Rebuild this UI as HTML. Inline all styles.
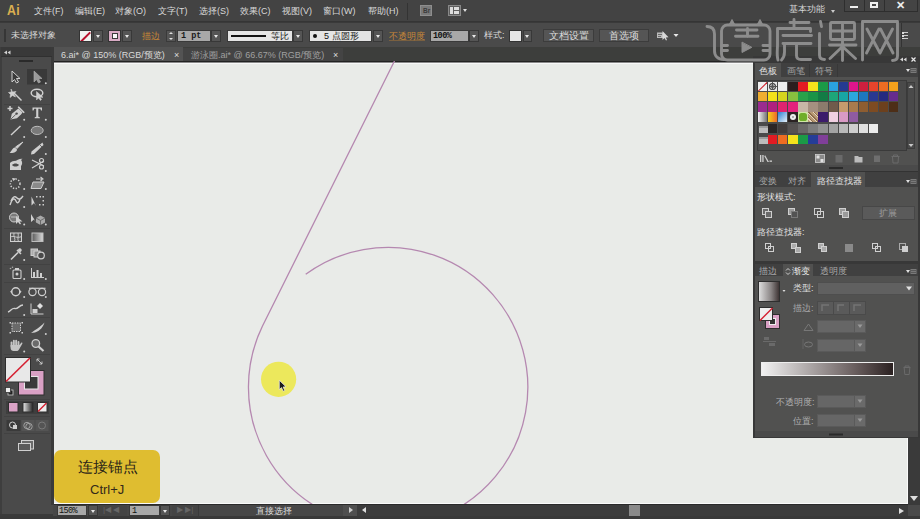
<!DOCTYPE html>
<html><head><meta charset="utf-8">
<style>
*{margin:0;padding:0;box-sizing:border-box}
html,body{width:920px;height:519px;overflow:hidden;background:#3a3a3a}
body{position:relative;font-family:"Liberation Sans",sans-serif;font-size:9px;color:#d8d8d8}
.a{position:absolute}
.t{position:absolute;white-space:nowrap;line-height:1}
#menu{left:0;top:0;width:920px;height:22px;background:#434343;border-bottom:1px solid #353535}
#ctrl{left:0;top:23px;width:920px;height:24px;background:#4a4a4a}
#tabs{left:0;top:47px;width:920px;height:14px;background:#3d3e3c}
#tool{left:0;top:47px;width:53px;height:467px;background:#4a4a4a}
#canvas{left:54px;top:61px;width:854px;height:443px;border-top:1px solid #222;background:linear-gradient(#8a8a8a 0 1px,#f8f8f8 1px 2.5px,#e9ebe8 2.5px);border-right:1px solid #fafafa;border-bottom:1px solid #fafafa}
#status{left:53px;top:504px;width:867px;height:12px;background:#3c3c3c;border-top:1px solid #2a2a2a}
#bot{left:0;top:516px;width:920px;height:3px;background:#393939}
.dd{position:absolute;background:#555;border:1px solid #383838}
.dd:after{content:"";position:absolute;left:50%;top:50%;margin-left:-2.5px;margin-top:-1px;border-left:2.5px solid transparent;border-right:2.5px solid transparent;border-top:3px solid #e8e8e8}
.fld{position:absolute;background:#a8a8a8;border:1px solid #3a3a3a;color:#222;font-size:9px}
.btn{position:absolute;background:#555;border:1px solid #3c3c3c;color:#ddd;font-size:10px;text-align:center;line-height:11px}
.or{color:#d98a2a}
</style></head><body>
<div id="menu" class="a"></div>
<div id="ctrl" class="a"></div>
<div id="tabs" class="a"></div>
<div id="tool" class="a"></div>
<div id="canvas" class="a"></div>
<div id="status" class="a"></div>
<div id="bot" class="a"></div>
<!-- MENU -->
<div class="t" style="left:6.8px;top:2.3px;font-size:15px;font-weight:bold;color:#dbb050;letter-spacing:0.3px;transform:scaleX(0.82);transform-origin:0 0">Ai</div>
<div class="t" style="left:34px;top:7px">文件(F)</div>
<div class="t" style="left:75px;top:7px">编辑(E)</div>
<div class="t" style="left:115px;top:7px">对象(O)</div>
<div class="t" style="left:158px;top:7px">文字(T)</div>
<div class="t" style="left:199px;top:7px">选择(S)</div>
<div class="t" style="left:240px;top:7px">效果(C)</div>
<div class="t" style="left:282px;top:7px">视图(V)</div>
<div class="t" style="left:323px;top:7px">窗口(W)</div>
<div class="t" style="left:368px;top:7px">帮助(H)</div>
<div class="a" style="left:407px;top:3px;width:1px;height:17px;background:#333"></div>
<div class="a" style="left:420px;top:5px;width:12px;height:11px;background:#7a7a7a;border:1px solid #8e8e8e"></div>
<div class="t" style="left:423px;top:7.5px;font-size:6.5px;font-weight:bold;color:#3a3a3a">Br</div>
<div class="a" style="left:448px;top:5px;width:13px;height:11px;background:#5e5e5e;border:1px solid #888"></div>
<div class="a" style="left:450px;top:7px;width:3px;height:7px;background:#ddd"></div>
<div class="a" style="left:454px;top:7px;width:5px;height:3px;background:#ddd"></div>
<div class="a" style="left:454px;top:11px;width:5px;height:3px;background:#ddd"></div>
<div class="a" style="left:463px;top:9px;border-left:2.5px solid transparent;border-right:2.5px solid transparent;border-top:3px solid #ddd"></div>
<div class="t" style="left:789px;top:5px;font-size:9px">基本功能</div>
<div class="a" style="left:831px;top:10px;border-left:2px solid transparent;border-right:2px solid transparent;border-top:3px solid #ccc"></div>
<div class="a" style="left:844px;top:0;width:74px;height:12px;background:#444;border:1px solid #2e2e2e;border-top:none"></div>
<div class="a" style="left:864px;top:0;width:1px;height:11px;background:#2e2e2e"></div>
<div class="a" style="left:884px;top:0;width:1px;height:11px;background:#2e2e2e"></div>
<div class="a" style="left:850px;top:6px;width:8px;height:2px;background:#eee"></div>
<div class="a" style="left:870px;top:2px;width:8px;height:6px;border:2px solid #eee"></div>
<div class="t" style="left:896px;top:0px;font-size:11px;color:#eee;font-weight:bold">✕</div>
<!-- CONTROL -->
<div class="a" style="left:4px;top:29px;width:2px;height:13px;background:#363636"></div>
<div class="t" style="left:11px;top:31px">未选择对象</div>
<div class="a" style="left:79px;top:30px;width:13px;height:12px;background:#f0f2f0;border:1px solid #333;overflow:hidden"><div class="a" style="left:-1px;top:4.6px;width:13px;height:1.6px;background:#b8102c;transform:rotate(-45deg)"></div></div>
<div class="dd" style="left:93px;top:30px;width:10px;height:12px"></div>
<div class="a" style="left:108px;top:30px;width:13px;height:12px;background:#d8abc4;border:1px solid #333"><div class="a" style="left:2.5px;top:2px;width:6px;height:6px;background:#f8f8f8;border:1.3px solid #3a3a3a"></div></div>
<div class="dd" style="left:122px;top:30px;width:10px;height:12px"></div>
<div class="t or" style="left:142px;top:31.5px;color:#c88838">描边</div>
<div class="a" style="left:166px;top:30px;width:10px;height:12px;background:#555;border:1px solid #3a3a3a"></div>
<div class="a" style="left:169px;top:32px;border-left:2px solid transparent;border-right:2px solid transparent;border-bottom:2px solid #ddd"></div>
<div class="a" style="left:169px;top:38px;border-left:2px solid transparent;border-right:2px solid transparent;border-top:2px solid #ddd"></div>
<div class="fld" style="left:177px;top:30px;width:34px;height:12px;padding-left:3px;line-height:10px;font-family:'Liberation Mono',monospace;font-size:8.5px;font-weight:bold;color:#1a1a1a">1 pt</div>
<div class="dd" style="left:211px;top:30px;width:10px;height:12px"></div>
<div class="a" style="left:227px;top:30px;width:66px;height:12px;background:#e4e4e4;border:1px solid #3a3a3a"></div>
<div class="a" style="left:231px;top:35px;width:35px;height:2px;background:#111"></div>
<div class="t" style="left:271px;top:32px;color:#111">等比</div>
<div class="dd" style="left:293px;top:30px;width:10px;height:12px"></div>
<div class="a" style="left:309px;top:30px;width:63px;height:12px;background:#e4e4e4;border:1px solid #3a3a3a"></div>
<div class="a" style="left:313px;top:34px;width:4px;height:4px;border-radius:50%;background:#111"></div>
<div class="t" style="left:324px;top:32px;color:#111">5 点圆形</div>
<div class="dd" style="left:373px;top:30px;width:10px;height:12px"></div>
<div class="t or" style="left:389px;top:31.5px;text-decoration:underline;text-decoration-color:#7a6040;color:#c88838">不透明度</div>
<div class="fld" style="left:430px;top:30px;width:39px;height:12px;padding-left:2px;line-height:10px;font-family:'Liberation Mono',monospace;font-size:8.5px;font-weight:bold;color:#111;letter-spacing:-0.5px">100%</div>
<div class="dd" style="left:469px;top:30px;width:10px;height:12px"></div>
<div class="t" style="left:484px;top:31px">样式:</div>
<div class="a" style="left:509px;top:30px;width:13px;height:12px;background:#e6e6e6;border:1px solid #333"></div>
<div class="dd" style="left:523px;top:30px;width:9px;height:12px"></div>
<div class="btn" style="left:543px;top:29px;width:51px;height:13px">文档设置</div>
<div class="btn" style="left:599px;top:29px;width:50px;height:13px">首选项</div>
<svg class="a" style="left:650px;top:26px" width="35" height="20" viewBox="650 26 35 20"><rect x="657" y="32.5" width="6.5" height="5.5" fill="#bbb"/><path d="M658 34.5 H662 M658 36.5 H661" stroke="#555" stroke-width="0.8"/><path d="M662.5 31 L662.5 40 L664.5 38 L666 40.5 L667 40 L665.8 37.5 L668.5 37.3Z" fill="#d8d8d8"/><path d="M673.5 34 L678.5 34 L676 37Z" fill="#e8e8e8"/></svg>
<div class="a" style="left:901px;top:23px;width:1px;height:24px;background:#333"></div>
<div class="a" style="left:902px;top:32px;width:1.5px;height:1.5px;background:#ddd"></div><div class="a" style="left:904px;top:32px;width:4px;height:1px;background:#ccc"></div>
<div class="a" style="left:902px;top:35px;width:1.5px;height:1.5px;background:#ddd"></div><div class="a" style="left:904px;top:35px;width:4px;height:1px;background:#ccc"></div>
<div class="a" style="left:902px;top:37.5px;width:1.5px;height:1.5px;background:#ddd"></div><div class="a" style="left:904px;top:37.5px;width:4px;height:1px;background:#ccc"></div>
<!-- TABS -->
<div class="a" style="left:54px;top:47px;width:129px;height:14px;background:#535353"></div>
<div class="t" style="left:61px;top:51px;color:#dadada">6.ai* @ 150% (RGB/预览)</div>
<div class="t" style="left:174px;top:51px;color:#ddd;font-size:9px">×</div>
<div class="a" style="left:183px;top:48px;width:160px;height:13px;background:#444"></div>
<div class="t" style="left:191px;top:51px;color:#a0a0a0">游泳圈.ai* @ 66.67% (RGB/预览)</div>
<div class="t" style="left:333px;top:51px;color:#ddd;font-size:9px">×</div>

<!-- TOOLBAR -->
<div class="a" style="left:0;top:47px;width:2px;height:467px;background:#3e3e3e"></div>
<div class="a" style="left:1px;top:47px;width:51px;height:9px;background:#393939"></div>
<div class="a" style="left:51px;top:47px;width:3px;height:458px;background:#3a3a3a"></div>
<div class="a" style="left:1px;top:56px;width:51px;height:1px;background:#303030"></div>
<svg class="a" style="left:0;top:0" width="54" height="505" viewBox="0 0 54 505">
<g fill="#d0d0d0"><path d="M4 52.5 L7 50.5 L7 54.5Z M7.5 52.5 L10.5 50.5 L10.5 54.5Z"/></g>
<rect x="19" y="60" width="14" height="2" fill="#2a2a2a"/>
<g stroke="#424242" stroke-width="1">
<line x1="4" y1="104.5" x2="50" y2="104.5"/>
<line x1="4" y1="228.5" x2="50" y2="228.5"/><line x1="4" y1="264.5" x2="50" y2="264.5"/>
<line x1="4" y1="282.5" x2="50" y2="282.5"/><line x1="4" y1="317.5" x2="50" y2="317.5"/>
<line x1="4" y1="354.5" x2="50" y2="354.5"/><line x1="4" y1="399.5" x2="50" y2="399.5"/>
<line x1="4" y1="416.5" x2="50" y2="416.5"/><line x1="4" y1="433.5" x2="50" y2="433.5"/>
</g>
<!-- row1 -->
<path d="M12 71 L12 82 L14.5 79.5 L16.5 83 L18.5 82 L16.5 78.5 L20 78.5Z" fill="#3a3a3a" stroke="#d0d0d0" stroke-width="1"/>
<rect x="27" y="69" width="20" height="15.5" fill="#393939"/>
<path d="M34 71 L34 82 L36.5 79.5 L38.5 83 L40.5 82 L38.5 78.5 L42 78.5Z" fill="#9a9a9a" stroke="#b0b0b0" stroke-width="0.6"/>
<g fill="#cfcfcf">
<circle cx="45.8" cy="83.2" r="1"/>
<circle cx="24.2" cy="119.8" r="1"/><circle cx="45.8" cy="119.8" r="1"/>
<circle cx="24.2" cy="137" r="1"/><circle cx="45.8" cy="137" r="1"/>
<circle cx="45.8" cy="154" r="1"/><circle cx="45.8" cy="171" r="1"/>
<circle cx="24.2" cy="189" r="1"/><circle cx="45.8" cy="189" r="1"/>
<circle cx="24.2" cy="207" r="1"/>
<circle cx="24.2" cy="224.5" r="1"/><circle cx="45.8" cy="224.5" r="1"/>
<circle cx="24.2" cy="260" r="1"/>
<circle cx="24.2" cy="279" r="1"/><circle cx="45.8" cy="279" r="1"/>
<circle cx="24.2" cy="297" r="1"/><circle cx="45.8" cy="297" r="1"/>
<circle cx="24.2" cy="315" r="1"/>
<circle cx="45.8" cy="334" r="1"/><circle cx="24.2" cy="351.5" r="1"/>
</g>
<!-- row2 wand / lasso -->
<g stroke="#cfcfcf" fill="none" stroke-width="1.4">
<line x1="14" y1="93" x2="21.5" y2="100.5"/>
<path d="M11 89 L12.5 92 L16 91.5 L13.8 94 L15.5 97 L12.5 95.5 L10 97.5 L10.5 94.5 L8.5 92.5 L11.5 92Z" fill="#cfcfcf" stroke-width="0.6"/>
<ellipse cx="37" cy="93" rx="5.8" ry="3.8" stroke-width="1.5"/>
<path d="M36.5 91.5 L36.5 100 L38.5 98 L40.5 100.5 L41.5 99.5 L40 97.3 L43 97.3Z" fill="#cfcfcf" stroke-width="0.5"/>
</g>
<!-- row3 pen / T -->
<g fill="#cfcfcf">
<path d="M7.5 108.5 H12.5 M10 106 V111" stroke="#cfcfcf" stroke-width="1.5"/>
<path d="M10.5 119.5 L11.8 113.8 L16.8 109.8 L18.5 108.5 L22.5 112.5 L21.2 114.2 L17 118.3 Z"/>
<path d="M18.2 106.8 L24.2 112.8" stroke="#cfcfcf" stroke-width="1.6"/>
<circle cx="16.6" cy="113.6" r="1.2" fill="#4a4a4a"/>
<path d="M11 119 L15.8 114.4" stroke="#4a4a4a" stroke-width="0.8"/>
<path d="M32.5 107.5 H42 V110.5 H41 L40.3 108.8 H38.3 V116.8 L39.8 117.3 V118.3 H34.7 V117.3 L36.2 116.8 V108.8 H34.2 L33.5 110.5 H32.5Z"/>
</g>
<!-- row4 line / ellipse -->
<line x1="11" y1="135" x2="20.5" y2="126" stroke="#cfcfcf" stroke-width="1.4"/>
<ellipse cx="37.2" cy="130.4" rx="6" ry="4.1" fill="#7a7a7a" stroke="#bdbdbd" stroke-width="1"/>
<!-- row5 brush / pencil -->
<g fill="#cfcfcf">
<path d="M23 142 L17 148.5 L15.5 147 Z" stroke="#cfcfcf" stroke-width="1"/>
<path d="M15 147.5 C12 148 12 151 9.5 153 C13.5 153.5 17 152 17 149.5Z"/>
<path d="M42.5 142.5 L43.5 145 L34 154 L31 154.5 L31.5 151.5 Z"/>
<path d="M40 145 L42 147" stroke="#4a4a4a" stroke-width="0.8"/>
</g>
<!-- row6 blob / scissors -->
<g fill="#cfcfcf">
<path d="M10 163 L10 170 L21 170 L21 166 C23 164 22 161 21 160 L22.5 158.8 C19 158.5 17 161 14 161 C12 161 11 162 10 163Z"/>
<path d="M12 165 C14 163 17 163 19 165 C17 167 14 167 12 165Z" fill="#4a4a4a"/>
</g>
<g stroke="#cfcfcf" fill="none" stroke-width="1.2">
<path d="M32 160 L44 166 M32 168 L44 161"/>
<circle cx="41.5" cy="160.5" r="2"/><circle cx="41.5" cy="167" r="2"/>
</g>
<!-- row7 rotate / scale -->
<circle cx="15.2" cy="183.8" r="4.8" fill="none" stroke="#cfcfcf" stroke-width="1.5" stroke-dasharray="1.3 1.5"/>
<path d="M12 178 L16 178.5 L13.5 181Z" fill="#cfcfcf"/>
<path d="M33 182 H44 L41 188.5 H31Z" fill="#8a8a8a" stroke="#cfcfcf" stroke-width="1"/>
<path d="M36 179 H42 M40.5 177 L43 179 L40.5 181" stroke="#cfcfcf" stroke-width="1.1" fill="none"/>
<!-- row8 warp / free transform -->
<path d="M10 205 C12 199 14 197 16 201 C17 204 19 203 20 199 M11 201 C13 196 15 196 17 198 C19 200 21 199 23 196" stroke="#cfcfcf" stroke-width="1.4" fill="none"/>
<g fill="#cfcfcf"><path d="M31.5 196.5 L31.5 205.5 L34 203 L36 206 Z"/>
<rect x="36" y="196" width="1.5" height="1.5"/><rect x="39.5" y="196" width="1.5" height="1.5"/><rect x="42.5" y="196" width="1.5" height="1.5"/>
<rect x="42.5" y="200" width="1.5" height="1.5"/><rect x="42.5" y="204" width="1.5" height="1.5"/><rect x="39" y="204" width="1.5" height="1.5"/>
</g>
<!-- row9 shape builder / perspective -->
<circle cx="14" cy="217.5" r="4.5" fill="#7a7a7a" stroke="#cfcfcf" stroke-width="1"/>
<path d="M11 217 H19" stroke="#cfcfcf" stroke-width="0.8"/>
<path d="M16 216 L16 224 L18 222 L20 224.5 L21 223.5 L19.5 221.5 L22.5 221.5Z" fill="#cfcfcf"/>
<path d="M31 214 L31 222 L34 219.5 L36.5 223 Z" fill="#cfcfcf"/>
<path d="M36 218 L40.5 215.5 L45 218 L45 222.5 L40.5 225 L36 222.5Z" fill="#a8a8a8"/>
<path d="M36 218 L40.5 220.5 L45 218 M40.5 220.5 V225" stroke="#5a5a5a" stroke-width="0.8" fill="none"/>
<!-- row10 mesh / gradient -->
<rect x="10.5" y="233" width="11" height="8.5" fill="#5a5a5a" stroke="#d0d0d0" stroke-width="1"/>
<path d="M10.5 237 C14 235 17 239 21.5 236.5 M14 233 C13 236 16 239 14.5 241.5 M18 233 C19 236 17 239 18.5 241.5" stroke="#d0d0d0" stroke-width="0.9" fill="none"/>
<defs><linearGradient id="tg" x1="0" x2="1"><stop offset="0" stop-color="#5a5a5a"/><stop offset="1" stop-color="#d8d8d8"/></linearGradient></defs>
<rect x="32" y="233" width="11" height="8.5" fill="url(#tg)" stroke="#bdbdbd" stroke-width="1"/>
<!-- row11 eyedropper / blend -->
<path d="M11 259.5 L18 252.5 M17 250 L21 254" stroke="#cfcfcf" stroke-width="1.6" fill="none"/>
<path d="M19 248.5 C20.5 247.5 22.5 249.5 21.5 251 L20 252.5 L17.5 250Z" fill="#cfcfcf"/>
<rect x="31" y="249" width="6.5" height="6.5" fill="#aaa" stroke="#cfcfcf"/>
<rect x="34" y="251" width="6" height="6" fill="#888" stroke="#cfcfcf"/>
<circle cx="41" cy="255.5" r="3.3" fill="#4a4a4a" stroke="#cfcfcf" stroke-width="1.2"/>
<!-- row12 sprayer / graph -->
<rect x="13" y="270" width="8" height="8.5" rx="1" fill="none" stroke="#cfcfcf" stroke-width="1.1"/>
<rect x="15" y="268" width="4" height="2" fill="#cfcfcf"/>
<circle cx="17" cy="274" r="1.5" fill="#cfcfcf"/>
<circle cx="10.5" cy="268.5" r="0.8" fill="#aaa"/><circle cx="12.5" cy="267.3" r="0.8" fill="#aaa"/>
<g fill="#cfcfcf"><rect x="31" y="268" width="1" height="10"/><rect x="31" y="277" width="13" height="1"/>
<rect x="33" y="272" width="2" height="5"/><rect x="36.5" y="270" width="2" height="7"/><rect x="40" y="273" width="2" height="4"/></g>
<!-- row13 -->
<circle cx="15.8" cy="291.7" r="4" fill="none" stroke="#cfcfcf" stroke-width="1.4"/>
<path d="M10 291.7 L12 290 L12 293.4Z M21.6 291.7 L19.6 290 L19.6 293.4Z" fill="#cfcfcf"/>
<circle cx="32.5" cy="292" r="3.6" fill="none" stroke="#cfcfcf" stroke-width="1.2"/>
<circle cx="42" cy="292" r="3.6" fill="none" stroke="#cfcfcf" stroke-width="1.2"/>
<path d="M29 288.3 H45.5" stroke="#cfcfcf" stroke-width="1.2"/>
<!-- row14 -->
<path d="M8 312 C11 311 12 307.5 15 308.5 C18 309.5 19 305 23 305" stroke="#cfcfcf" stroke-width="1.4" fill="none"/>
<path d="M31 303.5 V314 H43.5" stroke="#cfcfcf" stroke-width="1" fill="none"/>
<rect x="32.5" y="309" width="5" height="4" fill="#cfcfcf"/>
<path d="M40 303 L43 306 L40 309 L37 306Z" fill="#e0e0e0"/>
<!-- row15 artboard / knife -->
<rect x="12" y="323" width="8.5" height="8.5" fill="#6a6a6a" stroke="#cfcfcf" stroke-width="1" stroke-dasharray="1.5 1"/>
<g fill="#cfcfcf"><rect x="9.5" y="322" width="1.5" height="1.5"/><rect x="21.5" y="322" width="1.5" height="1.5"/><rect x="9.5" y="332" width="1.5" height="1.5"/><rect x="21.5" y="332" width="1.5" height="1.5"/></g>
<path d="M31 333 C35 330 39 328 44.5 322.5 C43 327 40 331 35 332.5Z" fill="#cfcfcf"/>
<!-- row16 hand / zoom -->
<g fill="#c4c4c4"><rect x="10.6" y="341.5" width="1.9" height="6" rx="0.9"/><rect x="12.9" y="339.8" width="1.9" height="7" rx="0.9"/><rect x="15.2" y="339.8" width="1.9" height="7" rx="0.9"/><rect x="17.5" y="341" width="1.9" height="6" rx="0.9"/>
<path d="M10.6 345 H19.4 L21.2 342.8 C22 342.2 22.8 343 22.3 343.8 L19 349.5 C18.3 350.6 17.5 351 16.5 351 H13.5 C12 351 10.6 349.8 10.6 348Z"/></g>
<circle cx="35.8" cy="343.5" r="3.8" fill="#6a6a6a" stroke="#cfcfcf" stroke-width="1.3"/>
<path d="M38.5 346.5 L43.5 351" stroke="#cfcfcf" stroke-width="2.2"/>
<!-- fill / stroke -->
<rect x="18.5" y="370.5" width="25.5" height="24.5" fill="#d9a0c4" stroke="#2e2e2e" stroke-width="1"/>
<rect x="24.5" y="376.5" width="13.5" height="12.5" fill="#3a3a3a" stroke="#e8e8e8" stroke-width="1"/>
<rect x="5.5" y="357.5" width="25" height="24.5" fill="#e8e8e8" stroke="#2e2e2e" stroke-width="1"/>
<line x1="6" y1="381.5" x2="30" y2="358" stroke="#d52032" stroke-width="1.6"/>
<path d="M37 359 L42 364 M37 359 L39.5 359 M37 359 L37 361.5 M42 364 L42 361.5 M42 364 L39.5 364" stroke="#cfcfcf" stroke-width="0.9" fill="none"/>
<rect x="8" y="390" width="5" height="5" fill="#222" stroke="#ccc" stroke-width="0.8"/>
<rect x="5.5" y="387.5" width="5" height="5" fill="#eee" stroke="#333" stroke-width="0.8"/>
<rect x="6" y="401" width="43" height="13" fill="#3e3e3e"/>
<rect x="8.5" y="402.5" width="9.5" height="9.5" fill="#dba3c7" stroke="#2e2e2e" stroke-width="1"/>
<defs><linearGradient id="tg2" x1="0" x2="1"><stop offset="0" stop-color="#ececec"/><stop offset="1" stop-color="#222"/></linearGradient></defs>
<rect x="23" y="402.5" width="10" height="9.5" fill="url(#tg2)" stroke="#2e2e2e" stroke-width="1"/>
<rect x="37.5" y="402.5" width="9.5" height="9.5" fill="#eee" stroke="#2e2e2e" stroke-width="1"/>
<line x1="38" y1="411.5" x2="46.5" y2="403" stroke="#d52032" stroke-width="1.4"/>
<rect x="6.5" y="420" width="14" height="11" fill="#3a3a3a"/>
<rect x="21.5" y="420" width="13" height="11" fill="#545454"/>
<rect x="35.5" y="420" width="13" height="11" fill="#545454"/>
<circle cx="12.5" cy="425" r="3" fill="none" stroke="#cfcfcf" stroke-width="1"/>
<rect x="13" y="425" width="4" height="4" fill="#cfcfcf"/>
<circle cx="27" cy="425.5" r="3.2" fill="none" stroke="#a0a0a0" stroke-width="1"/>
<circle cx="29" cy="426.5" r="3.2" fill="none" stroke="#a0a0a0" stroke-width="1"/>
<circle cx="42" cy="425.5" r="3.5" fill="none" stroke="#7a7a7a" stroke-width="1"/>
<rect x="21.5" y="440.5" width="12" height="8.5" fill="#6a6a6a" stroke="#cfcfcf" stroke-width="1"/>
<rect x="18.5" y="443.5" width="12" height="7" fill="#5a5a5a" stroke="#cfcfcf" stroke-width="1"/>
</svg>

<!-- CANVAS DRAWING -->
<svg class="a" style="left:54px;top:61px" width="854" height="443" viewBox="54 61 854 443">
<path d="M394.5 61 L262.5 326 A139.7 139.7 0 1 0 305.7 274.3" fill="none" stroke="#b588b0" stroke-width="1.3"/>
<circle cx="278.6" cy="379.3" r="17.6" fill="#ece85c"/>
<path d="M279.3 380.3 L279.3 389.5 L281.5 387.6 L283.2 391.2 L284.8 390.5 L283.1 387 L286 386.8Z" fill="#1a1a1a" stroke="#f0f0f0" stroke-width="0.7"/>
</svg>
<!-- CAPTION -->
<div class="a" style="left:54px;top:450px;width:106px;height:53px;background:#dfbd30;border-radius:7px"></div>
<div class="t" style="left:78px;top:460px;font-size:14.5px;font-weight:500;color:#2a2418">连接锚点</div>
<div class="t" style="left:90px;top:483px;font-size:13px;color:#34291a">Ctrl+J</div>
<!-- STATUS -->
<div class="a" style="left:53px;top:505px;width:290px;height:11px;background:#474747"></div>
<div class="fld" style="left:57px;top:505px;width:30px;height:11px;padding-left:1px;line-height:10px;font-family:'Liberation Mono',monospace;font-size:8.5px;letter-spacing:-0.6px;color:#111">150%</div>
<div class="dd" style="left:88px;top:505px;width:10px;height:11px"></div>
<div class="a" style="left:99px;top:505px;width:28px;height:11px;background:#444"></div>
<div class="t" style="left:103px;top:506px;font-size:8px;color:#666">|◀ ◀</div>
<div class="fld" style="left:129px;top:505px;width:31px;height:11px;padding-left:2px;line-height:10px;font-family:'Liberation Mono',monospace;font-size:8.5px;color:#111">1</div>
<div class="dd" style="left:160px;top:505px;width:10px;height:11px"></div>
<div class="a" style="left:172px;top:505px;width:27px;height:11px;background:#444"></div>
<div class="t" style="left:177px;top:506px;font-size:8px;color:#666">▶ ▶|</div>
<div class="a" style="left:198px;top:505px;width:1px;height:11px;background:#3a3a3a"></div>
<div class="t" style="left:256px;top:507px;color:#ddd">直接选择</div>
<div class="a" style="left:343px;top:505px;width:1px;height:11px;background:#3a3a3a"></div>
<div class="a" style="left:343px;top:505px;width:14px;height:11px;background:#4f4f4f"></div>
<div class="a" style="left:349px;top:507px;border-top:3px solid transparent;border-bottom:3px solid transparent;border-left:4px solid #ccc"></div>
<div class="a" style="left:362px;top:507px;border-top:3px solid transparent;border-bottom:3px solid transparent;border-right:4px solid #ddd"></div>
<div class="a" style="left:629px;top:505px;width:11px;height:11px;background:#8a8a8a"></div>
<div class="a" style="left:899px;top:508px;border-top:3.5px solid transparent;border-bottom:3.5px solid transparent;border-left:5px solid #ddd"></div>
<div class="a" style="left:908px;top:505px;width:12px;height:11px;background:#4a4a4a"></div>
<!-- V SCROLL -->
<div class="a" style="left:908px;top:437px;width:12px;height:68px;background:#3a3a3a"></div>
<div class="a" style="left:910px;top:496px;border-left:4px solid transparent;border-right:4px solid transparent;border-top:5px solid #ddd"></div>

<!-- RIGHT PANEL -->
<div class="a" style="left:753px;top:56px;width:167px;height:382px;background:#383838"></div>
<div class="a" style="left:755px;top:63px;width:163px;height:108px;background:#515150"></div>
<div class="a" style="left:755px;top:63px;width:163px;height:14px;background:#404040"></div>
<div class="a" style="left:755px;top:63px;width:26px;height:14px;background:#515150"></div>
<div class="t" style="left:759px;top:67px;color:#e0e0e0">色板</div>
<div class="t" style="left:787px;top:67px;color:#a8a8a8">画笔</div>
<div class="t" style="left:815px;top:67px;color:#a8a8a8">符号</div>
<div class="a" style="left:809px;top:64px;width:1px;height:13px;background:#383838"></div>
<div class="a" style="left:837px;top:64px;width:1px;height:13px;background:#383838"></div>
<svg class="a" style="left:0;top:0" width="920" height="519" viewBox="0 0 920 519">
<g fill="#d8d8d8"><path d="M900 59.5 L903 57.5 L903 61.5Z M903.5 59.5 L906.5 57.5 L906.5 61.5Z"/></g>
<path d="M911.5 57.5 L915.5 61.5 M915.5 57.5 L911.5 61.5" stroke="#e8e8e8" stroke-width="1.2"/>
<g id="pm"><path d="M906 69 L910 69 L908 72Z" fill="#e0e0e0"/><rect x="910.5" y="68" width="6" height="5" fill="#7a7a7a"/><path d="M911 69.5 H916 M911 71.5 H916" stroke="#444" stroke-width="0.6"/></g>
<rect x="757.5" y="80.5" width="149" height="70" fill="#4a4a4a" stroke="#3a3a3a"/>
<rect x="907.5" y="82.5" width="7" height="66" fill="#4a4a4a" stroke="#3c3c3c"/>
<path d="M908.5 88 L911 85 L913.5 88Z M908.5 144 L911 147 L913.5 144Z" fill="#c8c8c8"/>
</svg>
<!--SW-->
<div class="a" style="left:758.00px;top:81.50px;width:9.3px;height:9.4px;background:#f0f0f0;overflow:hidden"><div class="a" style="left:-2px;top:4px;width:14px;height:1.4px;background:#d01f2a;transform:rotate(-45deg)"></div></div>
<div class="a" style="left:768.08px;top:81.50px;width:9.3px;height:9.4px;background:#e8e8e8"><div class="a" style="left:1px;top:1px;width:7.3px;height:7.4px;border:1px solid #333;border-radius:50%"></div><div class="a" style="left:3px;top:3px;width:3.3px;height:3.4px;border:1px solid #333;border-radius:50%"></div><div class="a" style="left:4.2px;top:0.5px;width:1px;height:8.4px;background:#555"></div><div class="a" style="left:0.5px;top:4.2px;width:8.3px;height:1px;background:#555"></div></div>
<div class="a" style="left:778.16px;top:81.50px;width:9.3px;height:9.4px;background:#ececec"></div>
<div class="a" style="left:788.24px;top:81.50px;width:9.3px;height:9.4px;background:#2a1e1e"></div>
<div class="a" style="left:798.32px;top:81.50px;width:9.3px;height:9.4px;background:#e21b23"></div>
<div class="a" style="left:808.40px;top:81.50px;width:9.3px;height:9.4px;background:#f4e21c"></div>
<div class="a" style="left:818.48px;top:81.50px;width:9.3px;height:9.4px;background:#1b9a47"></div>
<div class="a" style="left:828.56px;top:81.50px;width:9.3px;height:9.4px;background:#2aa3df"></div>
<div class="a" style="left:838.64px;top:81.50px;width:9.3px;height:9.4px;background:#253a92"></div>
<div class="a" style="left:848.72px;top:81.50px;width:9.3px;height:9.4px;background:#e0168c"></div>
<div class="a" style="left:858.80px;top:81.50px;width:9.3px;height:9.4px;background:#cf1f3e"></div>
<div class="a" style="left:868.88px;top:81.50px;width:9.3px;height:9.4px;background:#e7442c"></div>
<div class="a" style="left:878.96px;top:81.50px;width:9.3px;height:9.4px;background:#ee6c22"></div>
<div class="a" style="left:889.04px;top:81.50px;width:9.3px;height:9.4px;background:#f3a01c"></div>
<div class="a" style="left:758.00px;top:92.00px;width:9.3px;height:9.4px;background:#eeae30"></div>
<div class="a" style="left:768.08px;top:92.00px;width:9.3px;height:9.4px;background:#f3e01a"></div>
<div class="a" style="left:778.16px;top:92.00px;width:9.3px;height:9.4px;background:#d6d51e"></div>
<div class="a" style="left:788.24px;top:92.00px;width:9.3px;height:9.4px;background:#87c03f"></div>
<div class="a" style="left:798.32px;top:92.00px;width:9.3px;height:9.4px;background:#28a24a"></div>
<div class="a" style="left:808.40px;top:92.00px;width:9.3px;height:9.4px;background:#1a9447"></div>
<div class="a" style="left:818.48px;top:92.00px;width:9.3px;height:9.4px;background:#137b45"></div>
<div class="a" style="left:828.56px;top:92.00px;width:9.3px;height:9.4px;background:#1da679"></div>
<div class="a" style="left:838.64px;top:92.00px;width:9.3px;height:9.4px;background:#17a6a4"></div>
<div class="a" style="left:848.72px;top:92.00px;width:9.3px;height:9.4px;background:#2ba8de"></div>
<div class="a" style="left:858.80px;top:92.00px;width:9.3px;height:9.4px;background:#1d77c0"></div>
<div class="a" style="left:868.88px;top:92.00px;width:9.3px;height:9.4px;background:#293891"></div>
<div class="a" style="left:878.96px;top:92.00px;width:9.3px;height:9.4px;background:#262a80"></div>
<div class="a" style="left:889.04px;top:92.00px;width:9.3px;height:9.4px;background:#662c8e"></div>
<div class="a" style="left:758.00px;top:102.30px;width:9.3px;height:9.4px;background:#9a2c8f"></div>
<div class="a" style="left:768.08px;top:102.30px;width:9.3px;height:9.4px;background:#b0207f"></div>
<div class="a" style="left:778.16px;top:102.30px;width:9.3px;height:9.4px;background:#e0236f"></div>
<div class="a" style="left:788.24px;top:102.30px;width:9.3px;height:9.4px;background:#e3217c"></div>
<div class="a" style="left:798.32px;top:102.30px;width:9.3px;height:9.4px;background:#c7b7a6"></div>
<div class="a" style="left:808.40px;top:102.30px;width:9.3px;height:9.4px;background:#a59080"></div>
<div class="a" style="left:818.48px;top:102.30px;width:9.3px;height:9.4px;background:#8b7b6c"></div>
<div class="a" style="left:828.56px;top:102.30px;width:9.3px;height:9.4px;background:#705b4b"></div>
<div class="a" style="left:838.64px;top:102.30px;width:9.3px;height:9.4px;background:#c59b6d"></div>
<div class="a" style="left:848.72px;top:102.30px;width:9.3px;height:9.4px;background:#a97b4d"></div>
<div class="a" style="left:858.80px;top:102.30px;width:9.3px;height:9.4px;background:#8d5d31"></div>
<div class="a" style="left:868.88px;top:102.30px;width:9.3px;height:9.4px;background:#7d4b22"></div>
<div class="a" style="left:878.96px;top:102.30px;width:9.3px;height:9.4px;background:#6c401d"></div>
<div class="a" style="left:889.04px;top:102.30px;width:9.3px;height:9.4px;background:#4d2e17"></div>
<div class="a" style="left:758.00px;top:112.40px;width:9.3px;height:9.4px;background:linear-gradient(90deg,#f4f4f4,#777)"></div>
<div class="a" style="left:768.08px;top:112.40px;width:9.3px;height:9.4px;background:linear-gradient(90deg,#f6d31a,#ee6a2a)"></div>
<div class="a" style="left:778.16px;top:112.40px;width:9.3px;height:9.4px;background:linear-gradient(135deg,#2b7fd0,#e8f2fb)"></div>
<div class="a" style="left:788.24px;top:112.40px;width:9.3px;height:9.4px;background:#2a2222"><div class="a" style="left:1.5px;top:1.5px;width:6.3px;height:6.4px;background:#eee;border-radius:50%"></div><div class="a" style="left:3.6px;top:3.6px;width:2px;height:2px;background:#999;border-radius:50%"></div></div>
<div class="a" style="left:798.32px;top:112.40px;width:9.3px;height:9.4px;background:#cfe6a6"><div class="a" style="left:1px;top:1px;width:7.3px;height:7.4px;background:#6fae2a;border-radius:35%"></div></div>
<div class="a" style="left:808.40px;top:112.40px;width:9.3px;height:9.4px;background:repeating-linear-gradient(45deg,#b79a74 0 2px,#e6d6c0 2px 3px,#8d6c4a 3px 4px)"></div>
<div class="a" style="left:818.48px;top:112.40px;width:9.3px;height:9.4px;background:#3c1b6b"></div>
<div class="a" style="left:828.56px;top:112.40px;width:9.3px;height:9.4px;background:#f1d0e2"></div>
<div class="a" style="left:838.64px;top:112.40px;width:9.3px;height:9.4px;background:#d99ac5"></div>
<div class="a" style="left:848.72px;top:112.40px;width:9.3px;height:9.4px;background:#8f5ba1"></div>
<div class="a" style="left:758.50px;top:126.00px;width:10px;height:7px;background:#bcbcbc;border-top:2px solid #9a9a9a"></div>
<div class="a" style="left:768.08px;top:124.00px;width:9.3px;height:9.4px;background:#2c2625"></div>
<div class="a" style="left:778.16px;top:124.00px;width:9.3px;height:9.4px;background:#423d3c"></div>
<div class="a" style="left:788.24px;top:124.00px;width:9.3px;height:9.4px;background:#565251"></div>
<div class="a" style="left:798.32px;top:124.00px;width:9.3px;height:9.4px;background:#6a6868"></div>
<div class="a" style="left:808.40px;top:124.00px;width:9.3px;height:9.4px;background:#7d7d7d"></div>
<div class="a" style="left:818.48px;top:124.00px;width:9.3px;height:9.4px;background:#919191"></div>
<div class="a" style="left:828.56px;top:124.00px;width:9.3px;height:9.4px;background:#a3a3a3"></div>
<div class="a" style="left:838.64px;top:124.00px;width:9.3px;height:9.4px;background:#b9b9b9"></div>
<div class="a" style="left:848.72px;top:124.00px;width:9.3px;height:9.4px;background:#cecece"></div>
<div class="a" style="left:858.80px;top:124.00px;width:9.3px;height:9.4px;background:#e0e0e0"></div>
<div class="a" style="left:868.88px;top:124.00px;width:9.3px;height:9.4px;background:#ececec"></div>
<div class="a" style="left:758.50px;top:137.00px;width:10px;height:7px;background:#bcbcbc;border-top:2px solid #9a9a9a"></div>
<div class="a" style="left:768.08px;top:135.00px;width:9.3px;height:9.4px;background:#e21b23"></div>
<div class="a" style="left:778.16px;top:135.00px;width:9.3px;height:9.4px;background:#ee6c22"></div>
<div class="a" style="left:788.24px;top:135.00px;width:9.3px;height:9.4px;background:#f4e21c"></div>
<div class="a" style="left:798.32px;top:135.00px;width:9.3px;height:9.4px;background:#1b9a47"></div>
<div class="a" style="left:808.40px;top:135.00px;width:9.3px;height:9.4px;background:#253d98"></div>
<div class="a" style="left:818.48px;top:135.00px;width:9.3px;height:9.4px;background:#803f99"></div>

<!--/SW-->
<!-- panel1 bottom -->
<svg class="a" style="left:0;top:0" width="920" height="519" viewBox="0 0 920 519">
<g fill="#d0d0d0">
<rect x="760" y="155" width="1.3" height="7"/><rect x="762.3" y="155" width="1.3" height="7"/>
<path d="M765 155 L769 162 L767.5 162 L764.5 156.5Z"/><rect x="769.5" y="160.5" width="2.5" height="1.3"/>
<rect x="815.5" y="154.5" width="9" height="8" fill="#8a8a8a" stroke="#d0d0d0" stroke-width="0.8"/>
<rect x="816.5" y="155.5" width="3" height="3" fill="#e0e0e0"/><rect x="820.5" y="159" width="3" height="3" fill="#e0e0e0"/>
<rect x="835.5" y="155" width="7" height="7.5" fill="#6a6a6a"/>
<path d="M854.5 156 H858 L859 157 H862.5 V162.5 H854.5Z" fill="#bcbcbc"/>
<rect x="874" y="155.5" width="6" height="6.5" fill="#6e6e6e"/>
<path d="M891.5 156.5 H899.5 M893.5 156.5 V155 H897.5 V156.5 M892.5 157 L893 163 H898 L898.5 157" fill="none" stroke="#6a6a6a" stroke-width="1"/>
<rect x="829" y="167.5" width="14" height="2" fill="#2e2e2e"/>
</g>
<rect x="755" y="165" width="163" height="6" fill="#4a4a4a"/>
<rect x="829" y="167" width="14" height="2" fill="#2a2a2a"/>
<rect x="755" y="171" width="163" height="1" fill="#333"/>
</svg>
<!-- PANEL 2 -->
<div class="a" style="left:755px;top:172px;width:163px;height:89px;background:#515150"></div>
<div class="a" style="left:755px;top:172px;width:163px;height:15px;background:#404040"></div>
<div class="a" style="left:811px;top:172px;width:54px;height:15px;background:#515150"></div>
<div class="t" style="left:759px;top:177px;color:#a8a8a8">变换</div>
<div class="t" style="left:788px;top:177px;color:#a8a8a8">对齐</div>
<div class="t" style="left:817px;top:177px;color:#e0e0e0">路径查找器</div>
<div class="t" style="left:757px;top:193px;color:#e0e0e0">形状模式:</div>
<div class="a" style="left:862px;top:206px;width:53px;height:14px;background:#5a5a5a;border:1px solid #474747"></div>
<div class="t" style="left:879px;top:209px;color:#9c9c9c">扩展</div>
<div class="t" style="left:757px;top:228px;color:#e0e0e0">路径查找器:</div>
<svg class="a" style="left:0;top:0" width="920" height="519" viewBox="0 0 920 519">
<use href="#pm" y="111"/>
<g stroke="#cfcfcf" stroke-width="1" fill="#6a6a6a">
<rect x="762.5" y="208.5" width="6" height="6"/><rect x="765.5" y="211.5" width="6" height="6"/>
<rect x="788.5" y="208.5" width="6" height="6" fill="#9a9a9a"/><rect x="791.5" y="211.5" width="6" height="6" fill="#535353" stroke="#7a7a7a"/>
<rect x="814.5" y="208.5" width="6" height="6" fill="none"/><rect x="817.5" y="211.5" width="6" height="6" fill="none"/>
<rect x="839.5" y="208.5" width="6" height="6" fill="#9a9a9a"/><rect x="842.5" y="211.5" width="6" height="6" fill="#9a9a9a"/>
<rect x="765.5" y="243.5" width="5" height="5" fill="none"/><rect x="768.5" y="246.5" width="5" height="5" fill="none"/>
<rect x="791.5" y="243.5" width="5" height="5" fill="#aaa"/><rect x="795.5" y="247.5" width="5" height="5" fill="#aaa"/>
<rect x="818.5" y="243.5" width="5" height="5" fill="#aaa"/><rect x="821.5" y="246.5" width="5" height="5" fill="#aaa"/>
<rect x="845.5" y="244.5" width="7" height="7" fill="#8a8a8a" stroke="#8a8a8a"/>
<rect x="872.5" y="243.5" width="5" height="5" fill="none"/><rect x="875.5" y="246.5" width="5" height="5" fill="none"/>
<rect x="899.5" y="243.5" width="6" height="6" fill="none" stroke="#aaa"/><rect x="902.5" y="246.5" width="5" height="5" fill="#cfcfcf"/>
</g>
</svg>
<!-- PANEL 3 -->
<div class="a" style="left:755px;top:264px;width:163px;height:167px;background:#515150"></div>
<div class="a" style="left:755px;top:264px;width:163px;height:12px;background:#404040"></div>
<div class="a" style="left:783px;top:264px;width:30px;height:12px;background:#515150"></div>
<div class="t" style="left:759px;top:267px;color:#a8a8a8">描边</div>
<div class="t" style="left:792px;top:267px;color:#ececec">渐变</div>
<svg class="a" style="left:785px;top:267px" width="6" height="9" viewBox="0 0 6 9"><path d="M1 3.5 L3 1.5 L5 3.5 M1 5.5 L3 7.5 L5 5.5" stroke="#ddd" stroke-width="0.9" fill="none"/></svg>
<div class="t" style="left:820px;top:267px;color:#a8a8a8">透明度</div>
<div class="t" style="left:793px;top:284px;color:#e0e0e0">类型:</div>
<div class="t" style="left:793px;top:304px;color:#a8a8a8">描边:</div>
<div class="t" style="left:776px;top:398px;color:#b0b0b0">不透明度:</div>
<div class="t" style="left:793px;top:417px;color:#b0b0b0">位置:</div>
<svg class="a" style="left:0;top:0" width="920" height="519" viewBox="0 0 920 519">
<use href="#pm" y="201"/>
<defs>
<linearGradient id="gs" x1="0" x2="1"><stop offset="0" stop-color="#e0e0e0"/><stop offset="0.6" stop-color="#8a8585"/><stop offset="1" stop-color="#3a3030"/></linearGradient>
<linearGradient id="gb" x1="0" x2="1"><stop offset="0" stop-color="#f2f2f2"/><stop offset="0.7" stop-color="#6b6060"/><stop offset="1" stop-color="#2a2020"/></linearGradient>
</defs>
<rect x="758.5" y="281.5" width="21" height="20" fill="url(#gs)" stroke="#2e2e2e"/>
<path d="M782.5 290 L785.5 290 L784 292Z" fill="#ddd"/>
<rect x="817.5" y="282.5" width="97" height="12" fill="#606060" stroke="#4e4e4e"/>
<path d="M906 286.5 L912 286.5 L909 290.5Z" fill="#e0e0e0"/>
<rect x="817.5" y="301.5" width="16" height="13" fill="#5a5a5a" stroke="#4a4a4a"/>
<rect x="833.5" y="301.5" width="16" height="13" fill="#5a5a5a" stroke="#4a4a4a"/>
<rect x="849.5" y="301.5" width="16" height="13" fill="#5a5a5a" stroke="#4a4a4a"/>
<path d="M822 311 V305 H829 M838 311 V305 H844 M854 311 V305 H861" stroke="#747474" stroke-width="1.5" fill="none"/>
<rect x="765.5" y="314.5" width="14" height="14" fill="#d9a0c4" stroke="#2e2e2e"/>
<rect x="769.5" y="318.5" width="6" height="6" fill="#333" stroke="#eee"/>
<rect x="759.5" y="307.5" width="13" height="13" fill="#eee" stroke="#2e2e2e"/>
<line x1="760" y1="320.5" x2="772.5" y2="308" stroke="#d52032" stroke-width="1.4"/>
<g fill="#6a6a6a"><rect x="764" y="337" width="5" height="3"/><rect x="769" y="343" width="6" height="3"/><rect x="763" y="341" width="13" height="1"/></g>
<rect x="817.5" y="320.5" width="48" height="12" fill="#666666" stroke="#5a5a5a"/>
<rect x="854.5" y="320.5" width="11" height="12" fill="#6a6a6a" stroke="#5a5a5a"/>
<path d="M857.5 324.5 L862.5 324.5 L860 328Z" fill="#9a9a9a"/>
<path d="M804 330.5 L808.5 324 L813 330.5Z" fill="none" stroke="#777"/>
<rect x="817.5" y="339.5" width="48" height="12" fill="#666666" stroke="#5a5a5a"/>
<rect x="854.5" y="339.5" width="11" height="12" fill="#6a6a6a" stroke="#5a5a5a"/>
<path d="M857.5 343.5 L862.5 343.5 L860 347Z" fill="#9a9a9a"/>
<ellipse cx="808.5" cy="344.5" rx="4" ry="2.5" fill="none" stroke="#777"/>
<path d="M803 339.5 V349.5" stroke="#777" stroke-dasharray="1 1"/>
<rect x="761.5" y="362.5" width="132" height="13" fill="url(#gb)" stroke="#eee"/>
<path d="M903.5 367.5 H910.5 M905 367.5 V366 H909 V367.5 M904.2 368 L904.8 374.5 H909.2 L909.8 368" fill="none" stroke="#6a6a6a" stroke-width="1"/>
<rect x="817.5" y="395.5" width="48" height="12" fill="#666666" stroke="#5a5a5a"/>
<rect x="854.5" y="395.5" width="11" height="12" fill="#6a6a6a" stroke="#5a5a5a"/>
<path d="M857.5 399.5 L862.5 399.5 L860 403Z" fill="#9a9a9a"/>
<rect x="817.5" y="414.5" width="48" height="12" fill="#666666" stroke="#5a5a5a"/>
<rect x="854.5" y="414.5" width="11" height="12" fill="#6a6a6a" stroke="#5a5a5a"/>
<path d="M857.5 418.5 L862.5 418.5 L860 422Z" fill="#9a9a9a"/>
<rect x="755" y="431" width="163" height="6" fill="#4a4a4a"/>
<rect x="829" y="433.5" width="14" height="2" fill="#2a2a2a"/>
</svg>

<!-- WATERMARK -->
<svg class="a" style="left:0;top:0" width="920" height="519" viewBox="0 0 920 519">
<g fill="none" stroke="#8c8c8c" stroke-width="2.9" stroke-linecap="round" stroke-linejoin="round">
<path d="M707 26.5 C712 26.5 714.5 29 714.5 34 V51 C714.5 56 718 59.5 724 59.5"/>
<rect x="721.5" y="25" width="48.5" height="35" rx="6"/>
<path d="M736.5 30 H757 M735.5 36.2 H758 M747.5 28.5 V36.5"/>
<path d="M721.5 45.5 H727.5 M721.5 50.5 H727.5 M763 45.5 H769.5 M763 50.5 H769.5"/>
<path d="M729 25 L732 19.5 L735 25Z M757 25 L760 19.5 L763 25Z M742 42.5 L742 52.5 L751.5 47.5Z" fill="#8c8c8c" stroke-width="1"/>
<!-- hu -->
<path d="M794 19.5 V27.5 M790 22.5 H809"/>
<path d="M778 60 C776.5 55 777.5 50 777.5 45 V28.5 H810.5 V31.5"/>
<path d="M783 35.5 H811.5 M783 43.5 H811"/>
<path d="M784.5 43.5 V52 C784.5 56 783 58.5 781.5 60"/>
<path d="M796.5 43.5 V55.5 C796.5 58.5 798.5 59.5 801 59.5 H810.5"/>
<!-- ke -->
<path d="M820.5 21.5 L821.5 26.5"/>
<path d="M819.5 33.5 V55 C819.5 58 821.5 59.5 824.5 59.5"/>
<rect x="830.5" y="22.5" width="24" height="17" rx="1"/>
<path d="M830.5 31 H854.5 M842.5 22.5 V60.5 M829.5 45 H856 M842 47 L830 58.5 M843 47 L855.5 58.5"/>
<!-- wang -->
<path d="M862.5 60 V21.5 H897.5 V56 C897.5 59 895.5 60.5 892.5 60.5"/>
<path d="M867 29 L880 53 M879 29 L866.5 53 M880.5 29 L893 53 M892.5 29 L880 53"/>
</g>
</svg>

</body></html>
